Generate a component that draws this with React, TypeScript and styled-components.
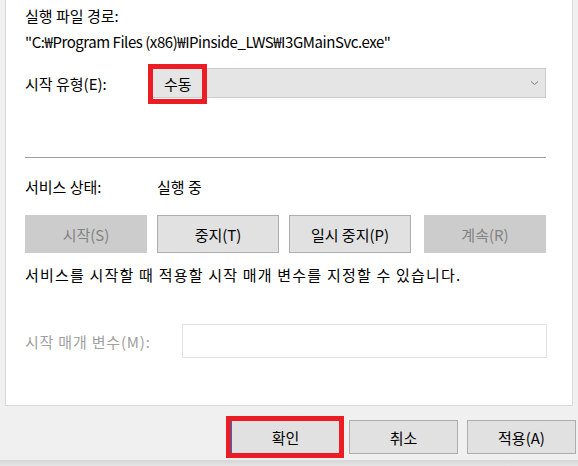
import React from 'react';
import styled, { createGlobalStyle } from 'styled-components';

const GlobalStyle = createGlobalStyle`
  html, body {
    margin: 0;
    padding: 0;
    background: #f0f0f0;
  }
  body {
    font-family: 'Noto Sans CJK KR', 'Noto Sans', sans-serif;
    font-size: 15px;
    color: #000;
  }
`;

const Window = styled.div`
  display: flex;
  flex-direction: column;
  width: 578px;
  height: 466px;
  overflow: hidden;
  background: #f0f0f0;
`;

const Panel = styled.div`
  display: flex;
  flex-direction: column;
  margin: 0 5px;
  padding: 0 20px 47px 19px;
  background: #fff;
  border: 1px solid #dadada;
  border-top: none;
`;

const Text = styled.div<{ $top?: number; $spacing?: number }>`
  margin-top: ${({ $top }) => $top ?? 0}px;
  line-height: 20px;
  white-space: nowrap;
  letter-spacing: ${({ $spacing }) => $spacing ?? 0}px;
`;

const Row = styled.div<{ $top: number; $height: number }>`
  display: flex;
  align-items: center;
  margin-top: ${({ $top }) => $top}px;
  height: ${({ $height }) => $height}px;
`;

const Label = styled.span<{ $muted?: boolean; $width?: number; $spacing?: number }>`
  width: ${({ $width }) => $width ?? 127}px;
  flex: none;
  white-space: nowrap;
  letter-spacing: ${({ $spacing }) => $spacing ?? 0}px;
  color: ${({ $muted }) => ($muted ? '#a0a0a0' : '#000')};
`;

const Combo = styled.div`
  position: relative;
  display: flex;
  align-items: center;
  justify-content: space-between;
  width: 394px;
  height: 30px;
  box-sizing: border-box;
  padding: 0 6px 0 11px;
  background: #e5e5e5;
  border: 1px solid #cccccc;
`;

const Highlight = styled.div<{ $w: number; $h: number; $l: number; $t: number }>`
  position: absolute;
  left: ${({ $l }) => $l}px;
  top: ${({ $t }) => $t}px;
  width: ${({ $w }) => $w}px;
  height: ${({ $h }) => $h}px;
  box-sizing: border-box;
  border: 5px solid #ec1c24;
  pointer-events: none;
`;

const Separator = styled.hr`
  margin: 59px 6px 0 0;
  border: none;
  border-top: 1px solid #a0a0a0;
  height: 1px;
`;

const ButtonRow = styled.div`
  display: flex;
  gap: 10px;
  margin-top: 19px;
`;

const ServiceButton = styled.button<{ $gap?: number }>`
  width: 122px;
  height: 38px;
  margin-left: ${({ $gap }) => $gap ?? 0}px;
  font-family: inherit;
  font-size: 15px;
  color: #000;
  background: #e1e1e1;
  border: 1px solid #adadad;
  padding: 0;

  &:disabled {
    color: #838383;
    background: #cccccc;
    border-color: #cccccc;
  }
`;

const Input = styled.input`
  width: 365px;
  height: 34px;
  box-sizing: border-box;
  border: 1px solid #e3e3e3;
  background: #fff;
  margin-left: 30px;
`;

const Footer = styled.div`
  flex: 1;
  display: flex;
  justify-content: flex-end;
  align-items: flex-start;
  gap: 9px;
  padding: 14px 2px 0 0;
`;

const DialogButton = styled.button<{ $default?: boolean }>`
  position: relative;
  width: 109px;
  height: 34px;
  font-family: inherit;
  font-size: 15px;
  color: #000;
  background: #e1e1e1;
  border: 1px solid ${({ $default }) => ($default ? '#0078d7' : '#adadad')};
  padding: 0;
`;

const Shadow = styled.div`
  height: 6px;
  background: linear-gradient(#d6d6d6, #e6e6e6);
`;

const Chevron = () => (
  <svg width="9" height="6" viewBox="0 0 9 6">
    <path d="M1 1.5 L4.5 4.5 L8 1.5" fill="none" stroke="#7a7a7a" strokeWidth="1" />
  </svg>
);

export default function App() {
  return (
    <Window>
      <GlobalStyle />
      <Panel>
        <Text $top={6}>실행 파일 경로:</Text>
        <Text $top={6} $spacing={-0.45}>"C:₩Program Files (x86)₩IPinside_LWS₩I3GMainSvc.exe"</Text>
        <Row $top={16} $height={30}>
          <Label>시작 유형(E):</Label>
          <Combo>
            <span>수동</span>
            <Chevron />
            <Highlight $l={-5} $t={-5} $w={59} $h={40} />
          </Combo>
        </Row>
        <Separator />
        <Row $top={17} $height={20}>
          <Label $width={132}>서비스 상태:</Label>
          <span>실행 중</span>
        </Row>
        <ButtonRow>
          <ServiceButton disabled>시작(S)</ServiceButton>
          <ServiceButton>중지(T)</ServiceButton>
          <ServiceButton>일시 중지(P)</ServiceButton>
          <ServiceButton disabled $gap={3}>계속(R)</ServiceButton>
        </ButtonRow>
        <Text $top={12} $spacing={1.2}>서비스를 시작할 때 적용할 시작 매개 변수를 지정할 수 있습니다.</Text>
        <Row $top={39} $height={34}>
          <Label $muted $spacing={0.8}>시작 매개 변수(M):</Label>
          <Input disabled />
        </Row>
      </Panel>
      <Footer>
        <DialogButton $default>
          확인
          <Highlight $l={-6} $t={-5} $w={118} $h={42} />
        </DialogButton>
        <DialogButton>취소</DialogButton>
        <DialogButton>적용(A)</DialogButton>
      </Footer>
      <Shadow />
    </Window>
  );
}
